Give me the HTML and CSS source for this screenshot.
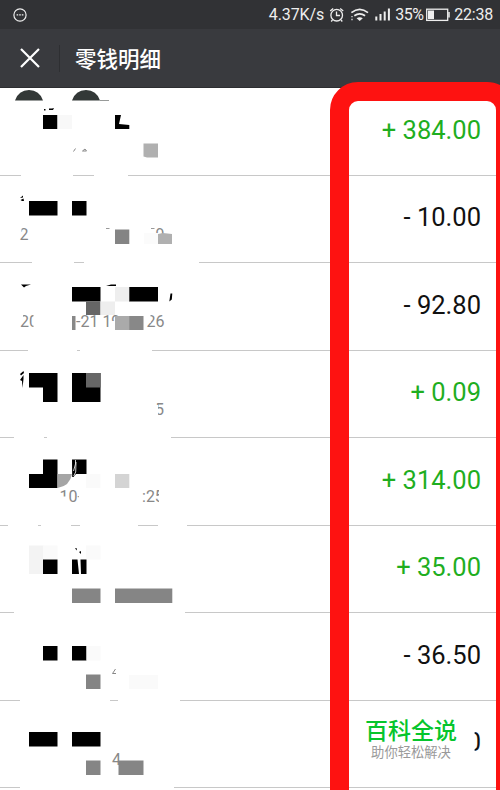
FILE: index.html
```
<!DOCTYPE html>
<html lang="zh-CN">
<head>
    <meta charset="UTF-8">
    <meta name="viewport" content="width=device-width, initial-scale=1.0">
    <title>零钱明细</title>
    <link rel="stylesheet" href="styles.css">
</head>
<body>

    <header class="status-bar">
        <svg class="status-more" width="16" height="16" viewBox="0 0 16 16">
            <circle cx="8" cy="8" r="6.1" fill="none" stroke="#eee" stroke-width="1.2"/>
            <path d="M4.6 7.8h1.6M7.2 7.8h1.6M9.8 7.8h1.6" stroke="#eee" stroke-width="1.3"/>
        </svg>
        <span class="speed">4.37K/s</span>
        <svg class="status-icons" width="70" height="20" viewBox="325 5 70 20" fill="none" stroke="#eee" stroke-width="1.3">
            <!-- alarm -->
            <circle cx="335.7" cy="15.2" r="5.8"/>
            <path d="M335.5 11.5v4h3.5M329.2 11l3-2.6M342.2 11l-3-2.6M331.5 20l-1.3 1.5M340 20l1.3 1.5"/>
            <!-- wifi -->
            <path d="M350.4 12.7q8.3-6.6 16.6 0M353.3 15.8q5.4-4 10.8 0" stroke-width="1.7"/>
            <path d="M355.6 18.3q3.1-2 6.2 0l-3.1 2.7z" fill="#eee" stroke="none"/>
            <path d="M351 16v1.3M351 18.8v1.4" stroke-width="1.2"/>
            <!-- signal -->
            <path d="M375.3 16.5V20.5M379.5 14V20.5M383.7 11.5V20.5M387.9 8.5V20.5" stroke-width="2"/>
        </svg>
        <span class="percent">35%</span>
        <svg class="battery" width="24" height="14" viewBox="0 0 24 14">
            <rect x="0.7" y="1.2" width="21" height="11.2" fill="none" stroke="#eee" stroke-width="1.3"/>
            <rect x="2" y="2.5" width="6" height="8.6" fill="#eee"/>
            <path d="M23 4v5.5" stroke="#eee" stroke-width="1.5"/>
        </svg>
        <span class="time">22:38</span>
    </header>

    <nav class="title-bar">
        <svg class="close" width="20" height="20" viewBox="0 0 20 20">
            <path d="M1 1L19 19M19 1L1 19" stroke="#fff" stroke-width="2.2"/>
        </svg>
        <span class="divider"></span>
        <h1>零钱明细</h1>
    </nav>

    <main class="records">
        <div class="record">
            <svg class="mosaic" viewBox="0 88 210 88">
                <path class="gap" d="M21 174h52v2H21zM94 174h34v2H94z"/>
                <path d="M15 100.5Q18.5 90 29 90Q39.5 90 43 100.5zM72 100.5Q75.5 90 86 90Q96.5 90 100 100.5zM100 100h9v.6h-9z" fill="#333837"/>
                <path d="M44 109h1.5v1.5H44zM49 108.5h3l2-.6-1 2h-4zM43 115h14.5v14H43zM115 115h6l-2 9 10.3 1v4H115z"/>
                <path d="M57.5 115H72v14H57.5z" fill="#f8f8f8"/>
                <path d="M73.5 151.5l2-3M82.5 151l2.5-2 1.5 2z" stroke="#888" fill="none"/>
                <path d="M143.5 143.5H158V157.5H147l-3.5-1z" fill="#b0b0b0"/>
            </svg>
            <span class="amount income">+ 384.00</span>
        </div>
        <div class="record">
            <svg class="mosaic" viewBox="0 175 210 88">
                <path class="gap" d="M32 261h42v2H32zM84 261h115v2H84z"/>
                <path d="M20 198l3-2.5v2zM20.5 200l3-1.500.5 2.500h-2zM29 201h28.500v14.500H29zM72 201h14.500v14.500H72z"/>
                <text x="19.500" y="239.500">2</text>
                <text x="155.500" y="239.500">9</text>
                <path class="gap" d="M154 233h5v11h-5zM19 227h2.500v5H19z"/>
                <path d="M144 233h14v11h-14z" fill="#fbfbfb"/>
                <path d="M158 234l5-1 9 1v10h-14z" fill="#b0b0b0"/>
                <path d="M115 229.500h14.300V244H115z" fill="#848484"/>
                <path d="M106 228.500h3.500M151 228.500h3.500" stroke="#999"/>
            </svg>
            <span class="amount">- 10.00</span>
        </div>
        <div class="record">
            <svg class="mosaic" viewBox="0 263 210 88">
                <path class="gap" d="M28 349h49v2H28zM80 349h72v2H80z"/>
                <path d="M21 284.500h10l-5 1.500-2 1.500zM106 286l5-1.500h5v1.500zM72 287h28.500v14.500H72zM129 287h29v14.500h-29zM170.500 293.500h1.800l-.5 6-2.500 2z"/>
                <path d="M86 301.500h14.500V315H86z" fill="#666"/>
                <path d="M100.500 301.500H115V315h-14.500zM115 287h14.300v14.500H115z" fill="#eee"/>
                <text x="20" y="327">20</text>
                <path class="gap" d="M33.500 313H40v16h-6.500zM19 314h4v6h-4z"/>
                <text x="76" y="327">-21 19</text>
                <text x="146.500" y="327">26</text>
                <path class="gap" d="M145 313h5.500v10H145zM110.500 321h5v8h-5z"/>
                <path d="M72 316h3.500v14H72zM129 316h14.500v14H129z" fill="#888"/>
                <path d="M115 316h14.300v14H115z" fill="#aaa"/>
            </svg>
            <span class="amount">- 92.80</span>
        </div>
        <div class="record">
            <svg class="mosaic" viewBox="0 350 210 88">
                <path class="gap" d="M14 436h30v2H14zM47 436h124v2H47z"/>
                <path d="M20 374l3.500-3 .5 2-3 2.500zM20 380l3.500-5v4l-1 9-.5-7zM29 373h28.500v29H43v-14.500H29zM72 373h28.500v29H72z"/>
                <path d="M86 373h14.500v14.500H86z" fill="#666"/>
                <text x="155" y="414.500">5</text>
                <path class="gap" d="M154 405h4v10h-4z"/>
            </svg>
            <span class="amount income">+ 0.09</span>
        </div>
        <div class="record">
            <svg class="mosaic" viewBox="0 438 210 88">
                <path class="gap" d="M8 524h30v2H8zM41 524h30v2H41zM80 524h58v2H80zM158 524h29v2h-29z"/>
                <path d="M43 459.500h14.500V488H29v-14H43zM72 459.500h14.500V474H76l-2.500 3h-1.300z"/>
                <path d="M75.500 460v4l-2 7M76 462l-.3 10-2 4" stroke="#fff" stroke-width=".8" fill="none"/>
                <path d="M57.500 474H72Q70 486 57.500 488z" fill="#a5a5a5"/>
                <path d="M86 474h14.500v14H86z" fill="#fafafa"/>
                <path d="M115 474h14.300v14H115z" fill="#d4d4d4"/>
                <text x="59.500" y="502">10-</text>
                <path class="gap" d="M60 496.500h7v8h-7zM78.800 490h5v14h-5z"/>
                <text x="142" y="502">:25</text>
                <path class="gap" d="M159 489h6v15h-6z"/>
            </svg>
            <span class="amount income">+ 314.00</span>
        </div>
        <div class="record">
            <svg class="mosaic" viewBox="0 525 210 88">
                <path class="gap" d="M14 611h171v2H14z"/>
                <path d="M29 545.500h14.500V574H29z" fill="#f3f3f3"/>
                <path d="M43 545.500h14.500v14H43zM86 545.500h14.500v14H86z" fill="#fafafa"/>
                <path d="M75 548l2 .5-.5 2zM79 552l2-1v3zM43 559.500h14.500V574H43zM72 559.500h5.500L79 574h-7zM80.500 559.500h6V574H81z"/>
                <path d="M72 588.500h28.500V603H72zM115 588.500h57.300V603H115z" fill="#858585"/>
            </svg>
            <span class="amount income">+ 35.00</span>
        </div>
        <div class="record">
            <svg class="mosaic" viewBox="0 613 210 88">
                <path class="gap" d="M20 699h90v2H20zM118 699h62v2h-62z"/>
                <path d="M43 646h14.500v14.500H43zM72 646h14.500v14.500H72z"/>
                <path d="M86.500 646h14v14.500h-14zM129 675h29v14h-29z" fill="#fafafa"/>
                <path d="M86 674.500h14.500V689H86z" fill="#848484"/>
                <path d="M115.500 669l-3 4.500h3.500" stroke="#888" fill="none"/>
            </svg>
            <span class="amount">- 36.50</span>
        </div>
        <div class="record">
            <svg class="mosaic" viewBox="0 700 210 88">
                <path class="gap" d="M20 786h154v2H20z"/>
                <path d="M29 732h28.500v14.500H29zM72 732h28.500v14.500H72z"/>
                <text x="112" y="764.500">4</text>
                <path d="M86 760.500h14.500V775H86zM118.500 760.500h25V775h-25z" fill="#858585"/>
            </svg>
            <span class="brand">
                <strong>百科全说</strong>
                <small>助你轻松解决</small>
            </span>
            <span class="amount cut">0</span>
        </div>
    </main>

    <div class="highlight"></div>

</body>
</html>
```

FILE: styles.css
```
body {
    margin: 0;
    height: 790px;
    position: relative;
    overflow: hidden;
    background-color: #fff;
    font-family: Roboto, "Noto Sans CJK SC", sans-serif;
}
svg {
    display: block;
    flex: none;
}
.status-bar {
    display: flex;
    align-items: center;
    box-sizing: border-box;
    height: 29px;
    padding: 0 7px 0 12px;
    background-color: #313235;
    color: #eee;
    font-size: 16px;
    white-space: nowrap;
}
.speed {
    margin-left: auto;
    letter-spacing: -0.1px;
}
.status-icons {
    margin-left: 2px;
}
.percent {
    width: 31px;
    margin-left: -1px;
    letter-spacing: -0.4px;
}
.battery {
    margin-right: 4px;
}
.time {
    letter-spacing: -0.2px;
}
.title-bar {
    display: flex;
    align-items: center;
    box-sizing: border-box;
    height: 59px;
    padding-left: 20px;
    background-color: #393a3e;
    border-bottom: 1px solid #2d2e31;
}
.divider {
    width: 1px;
    height: 27px;
    margin: 0 15px 0 19px;
    background-color: #2e2f32;
}
.title-bar h1 {
    margin: 0 0 2px;
    color: #fff;
    font-size: 21.5px;
    font-weight: 500;
}
.record {
    display: flex;
    align-items: center;
    height: 87.5px;
    box-shadow: inset 0 -1px #c8c8c8;
}
.mosaic {
    width: 210px;
    height: 88px;
}
.mosaic text {
    fill: #888;
    font-size: 16px;
}
.mosaic .gap {
    fill: #fff;
}
.amount {
    margin: 0 19px 4px auto;
    color: #111;
    font-size: 25.5px;
    line-height: 30px;
}
.income {
    color: #1fae1f;
}
.brand {
    display: flex;
    flex-direction: column;
    align-items: center;
    width: 94px;
    margin: 0 0 7px 154px;
}
.brand strong {
    color: #06c52c;
    font-size: 23px;
    font-weight: 500;
    line-height: 23px;
}
.brand small {
    color: #999;
    font-size: 13.3px;
    line-height: 19px;
}
.cut {
    clip-path: inset(0 0 0 8px);
}
/* red frame around the amounts, runs off the right and bottom edges */
.highlight {
    position: absolute;
    top: 82px;
    left: 330px;
    box-sizing: border-box;
    width: 185px;
    height: 740px;
    border: 19.5px solid #fe1211;
    border-radius: 28px;
}
```
